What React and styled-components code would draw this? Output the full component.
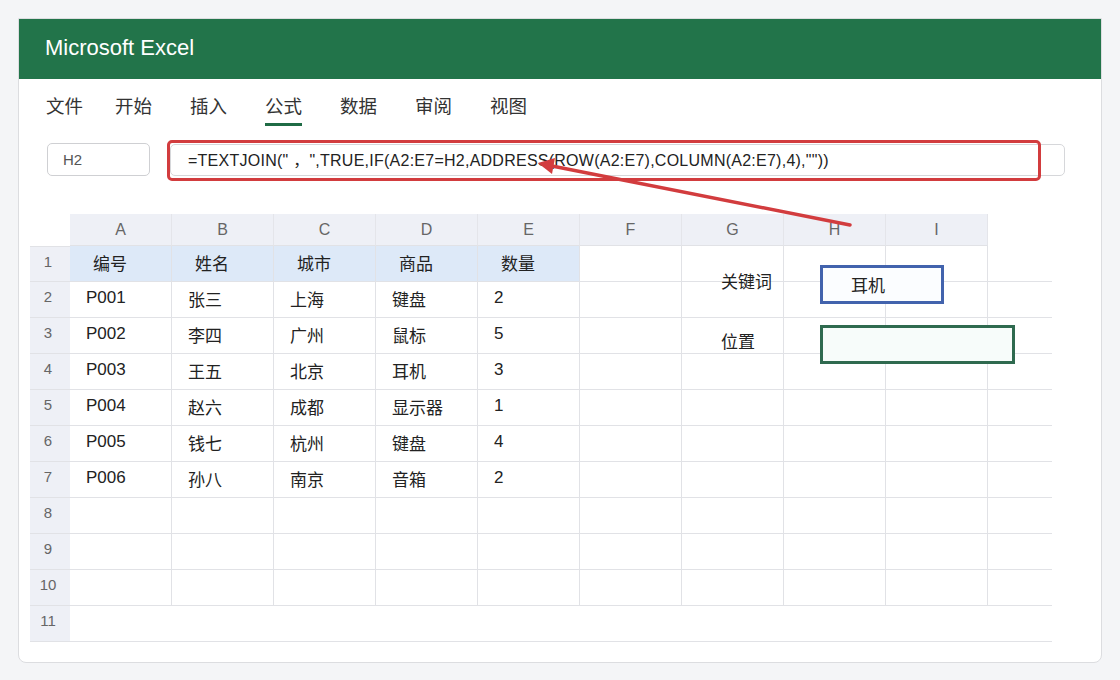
import styled, { createGlobalStyle } from "styled-components";

const GlobalStyle = createGlobalStyle`
  body {
    margin: 0;
    background: #f4f5f7;
    font-family: "Liberation Sans", "Noto Sans CJK SC", sans-serif;
  }
`;

const Page = styled.div`
  padding: 18px;
  height: 680px;
  box-sizing: border-box;
`;

const Card = styled.div`
  position: relative;
  width: 1084px;
  height: 645px;
  box-sizing: border-box;
  background: #fff;
  border: 1px solid #dcdde0;
  border-radius: 0 0 8px 8px;
`;

const Header = styled.div`
  height: 60px;
  background: #22744a;
  display: flex;
  align-items: center;
  padding: 0 0 2px 26px;
  box-sizing: border-box;
  color: #fff;
  font-size: 22px;
`;

const Menu = styled.div`
  display: flex;
  gap: 38px;
  padding: 14px 0 0 27px;
`;

const Tab = styled.div`
  font-family: "Noto Sans CJK SC", sans-serif;
  font-size: 18.5px;
  line-height: 24px;
  color: #333;
  padding-bottom: 6px;
  border-bottom: 3px solid ${(p) => (p.$active ? "#1f6b45" : "transparent")};
  margin-right: ${(p) => (p.$tight ? "-6px" : "0")};
`;

const FormulaRow = styled.div`
  display: flex;
  align-items: center;
  gap: 20px;
  margin-top: 17px;
  padding-left: 28px;
  height: 33px;
`;

const NameBox = styled.div`
  width: 103px;
  height: 33px;
  box-sizing: border-box;
  border: 1px solid #cfd0d3;
  border-radius: 5px;
  display: flex;
  align-items: center;
  padding-left: 15px;
  font-size: 15px;
  color: #555;
`;

const FormulaInput = styled.div`
  position: relative;
  width: 895px;
  height: 32px;
  box-sizing: border-box;
  border: 1px solid #d6d7da;
  border-radius: 5px;
  display: flex;
  align-items: center;
  padding: 0 0 2px 17px;
  font-size: 16px;
  letter-spacing: 0.25px;
  color: #222;
  white-space: nowrap;
`;

const RedMark = styled.div`
  position: absolute;
  left: -4px;
  top: -5px;
  width: 874px;
  height: 41px;
  box-sizing: border-box;
  border: 3px solid #d23c3e;
  border-radius: 5px;
`;

const Arrow = styled.svg`
  position: absolute;
  left: -19px;
  top: -19px;
  width: 1120px;
  height: 680px;
  pointer-events: none;
`;

const SheetWrap = styled.div`
  position: relative;
  margin: 38px 0 0 11px;
  width: 1022px;
`;

const Sheet = styled.div`
  display: grid;
  grid-template-columns: 40px repeat(9, 102px) 64px;
  grid-template-rows: 32px repeat(11, 36px);
`;

const Cell = styled.div`
  box-sizing: border-box;
  display: flex;
  align-items: center;
  padding-left: ${(p) => (p.$head ? "23px" : "16px")};
  padding-bottom: 3px;
  font-size: 17px;
  color: #222;
  background: ${(p) => (p.$head ? "#dde9f8" : "#fff")};
  border-bottom: 1px solid #e1e2e6;
  border-right: ${(p) => (p.$noRight ? "none" : "1px solid #e1e2e6")};
`;

const ColHead = styled.div`
  box-sizing: border-box;
  display: flex;
  align-items: center;
  justify-content: center;
  font-size: 16px;
  color: #666;
  background: ${(p) => (p.$blank ? "transparent" : "#eef0f6")};
  border-bottom: ${(p) => (p.$blank ? "none" : "1px solid #e1e2e6")};
  border-right: ${(p) => (p.$blank ? "none" : "1px solid #e4e5ea")};
`;

const RowHead = styled.div`
  box-sizing: border-box;
  display: flex;
  align-items: center;
  justify-content: center;
  padding: 0 4px 6px 0;
  font-size: 15px;
  color: #666;
  background: #eef0f6;
  border-top: ${(p) => (p.$first ? "1px solid #e1e2e6" : "none")};
  border-bottom: 1px solid #e1e2e6;
`;

const Lookup = styled.div`
  position: absolute;
  left: 691px;
  top: 51px;
  display: grid;
  grid-template-columns: 99px auto;
  row-gap: 21px;
  align-items: center;
`;

const Label = styled.div`
  font-family: "Noto Sans CJK SC", sans-serif;
  font-size: 17px;
  line-height: 24px;
  padding-bottom: 8px;
  color: #222;
`;

const FieldBox = styled.div`
  width: ${(p) => p.$w}px;
  height: 39px;
  box-sizing: border-box;
  border: 3px solid ${(p) => p.$color};
  background: ${(p) => p.$bg};
  display: flex;
  align-items: center;
  padding-left: 28px;
  font-family: "Noto Sans CJK SC", sans-serif;
  font-size: 17px;
  color: #222;
`;

const tabs = ["文件", "开始", "插入", "公式", "数据", "审阅", "视图"];
const cols = ["A", "B", "C", "D", "E", "F", "G", "H", "I"];
const rows = [
  ["编号", "姓名", "城市", "商品", "数量"],
  ["P001", "张三", "上海", "键盘", "2"],
  ["P002", "李四", "广州", "鼠标", "5"],
  ["P003", "王五", "北京", "耳机", "3"],
  ["P004", "赵六", "成都", "显示器", "1"],
  ["P005", "钱七", "杭州", "键盘", "4"],
  ["P006", "孙八", "南京", "音箱", "2"],
];

export default function App() {
  const cells = [];
  cells.push(<ColHead key="corner" $blank />);
  cols.forEach((c) => cells.push(<ColHead key={"h" + c}>{c}</ColHead>));
  cells.push(<ColHead key="hx" $blank />);
  for (let r = 0; r < 11; r++) {
    cells.push(
      <RowHead key={"r" + r} $first={r === 0}>
        {r + 1}
      </RowHead>
    );
    const data = rows[r] || [];
    for (let c = 0; c < 10; c++) {
      const last = c === 9 || r === 10;
      cells.push(
        <Cell key={r + "-" + c} $head={r === 0 && c < 5} $noRight={last}>
          {c < 5 ? data[c] : ""}
        </Cell>
      );
    }
  }

  return (
    <>
      <GlobalStyle />
      <Page>
        <Card>
          <Header>Microsoft Excel</Header>
          <Menu>
            {tabs.map((t, i) => (
              <Tab key={t} $active={t === "公式"} $tight={i === 0}>
                {t}
              </Tab>
            ))}
          </Menu>
          <FormulaRow>
            <NameBox>H2</NameBox>
            <FormulaInput>
              =TEXTJOIN(" ，",TRUE,IF(A2:E7=H2,ADDRESS(ROW(A2:E7),COLUMN(A2:E7),4),""))
              <RedMark />
            </FormulaInput>
          </FormulaRow>
          <SheetWrap>
            <Sheet>{cells}</Sheet>
            <Lookup>
              <Label>关键词</Label>
              <FieldBox $w={124} $color="#4263ad" $bg="#fbfdff">
                耳机
              </FieldBox>
              <Label>位置</Label>
              <FieldBox $w={195} $color="#2f6a4f" $bg="#f7fcfa" />
            </Lookup>
          </SheetWrap>
          <Arrow viewBox="0 0 1120 680">
            <line x1="850" y1="225" x2="552" y2="166" stroke="#d23c3e" strokeWidth="3.5" strokeLinecap="round" />
            <polygon points="538,163 555,158 552,174" fill="#d23c3e" />
          </Arrow>
        </Card>
      </Page>
    </>
  );
}
